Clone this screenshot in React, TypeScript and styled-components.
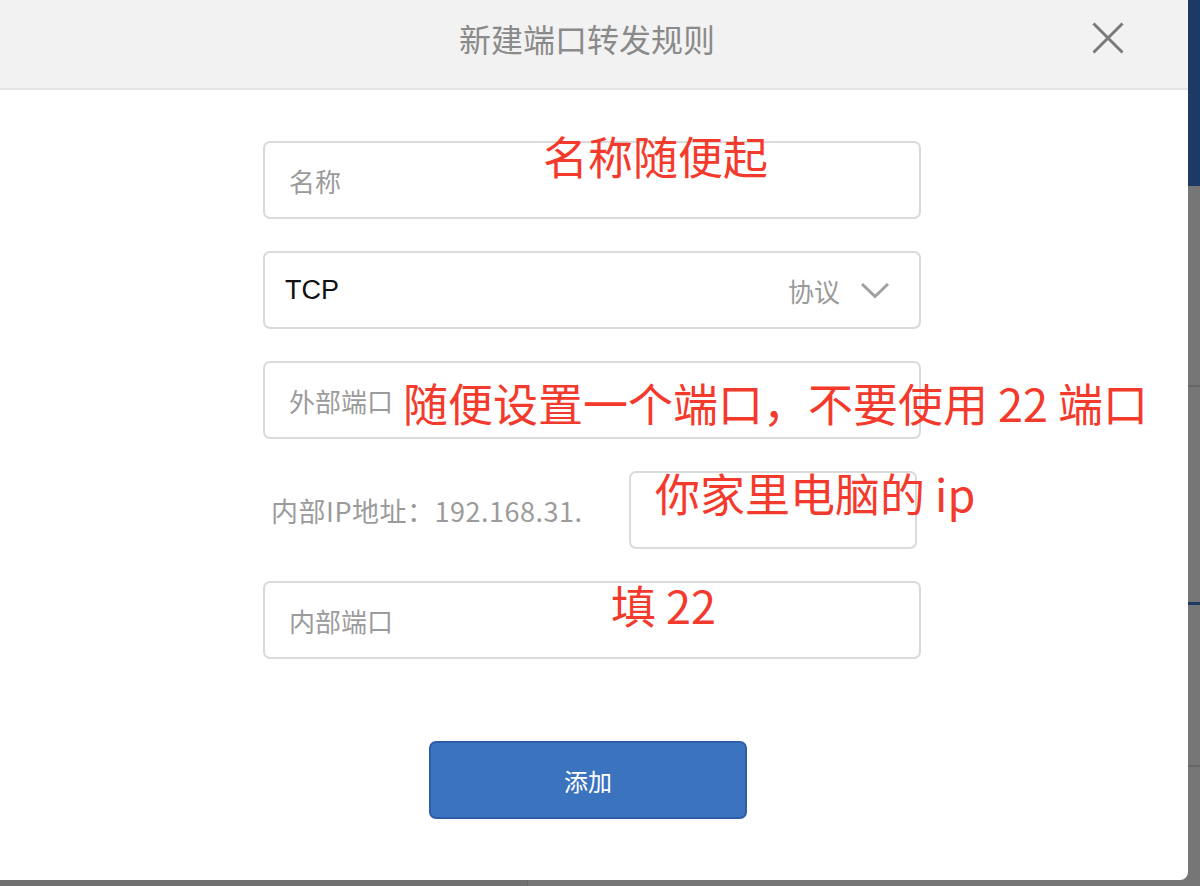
import styled, { createGlobalStyle } from "styled-components";

const GlobalStyle = createGlobalStyle`
  html, body {
    margin: 0;
    padding: 0;
  }
  body {
    width: 1200px;
    height: 886px;
    overflow: hidden;
    font-family: "Noto Sans CJK SC", "Noto Sans", sans-serif;
  }
  * {
    box-sizing: border-box;
  }
`;

const Annotation = ({ top, left, children }: { top: number; left: number; children: string }) => (
  <StyledNote style={{ top, left }}>{children}</StyledNote>
);

const App = () => {
  return (
    <StyledPage>
      <GlobalStyle />
      <StyledBackdrop>
        <div className="topbar" />
        <BackdropRow $height={201} $line="#676767" $lineWidth={2} />
        <BackdropRow $height={218} $line="#1d3a62" $lineWidth={3} />
        <BackdropRow $height={162} $line="#676767" $lineWidth={2} />
        <div className="footer">
          <div className="left" />
          <div className="right" />
        </div>
      </StyledBackdrop>

      <StyledModal>
        <StyledHeader>
          <div className="title">新建端口转发规则</div>
          <button className="close" aria-label="close">
            <svg width="32" height="32" viewBox="0 0 32 32">
              <line x1="1.5" y1="1.5" x2="30.5" y2="30.5" stroke="#7a7a7a" strokeWidth="3" />
              <line x1="30.5" y1="1.5" x2="1.5" y2="30.5" stroke="#7a7a7a" strokeWidth="3" />
            </svg>
          </button>
        </StyledHeader>

        <StyledBody>
          <StyledForm>
            <Field placeholder="名称" />
            <StyledSelect>
              <span className="value">TCP</span>
              <span className="label">协议</span>
              <svg width="30" height="17" viewBox="0 0 30 17">
                <polyline points="2,2 15,14.5 28,2" fill="none" stroke="#a0a0a0" strokeWidth="3" />
              </svg>
            </StyledSelect>
            <Field placeholder="外部端口" />
            <StyledIpRow>
              <span className="label">内部IP地址：192.168.31.</span>
              <Field $width="288px" />
            </StyledIpRow>
            <Field placeholder="内部端口" />
          </StyledForm>
          <StyledActions>
            <button>添加</button>
          </StyledActions>

          <Annotation top={43} left={543}>名称随便起</Annotation>
          <Annotation top={290} left={403}>随便设置一个端口，不要使用 22 端口</Annotation>
          <Annotation top={380} left={655}>你家里电脑的 ip</Annotation>
          <Annotation top={492} left={611}>填 22</Annotation>
        </StyledBody>
      </StyledModal>
    </StyledPage>
  );
};

export default App;

const StyledPage = styled.div`
  position: relative;
  width: 1200px;
  height: 886px;
  background: #767676;
  overflow: hidden;
`;

const StyledBackdrop = styled.div`
  display: flex;
  flex-direction: column;
  height: 100%;
  .topbar {
    height: 186px;
    background: #1c3a63;
  }
  .footer {
    flex: 1;
    display: flex;
  }
  .left {
    width: 528px;
    background: #707070;
    border-right: 1px solid #686868;
  }
  .right {
    flex: 1;
    background: #767676;
  }
`;

const BackdropRow = styled.div<{ $height: number; $line: string; $lineWidth: number }>`
  height: ${(p) => p.$height}px;
  background: #767676;
  border-bottom: ${(p) => p.$lineWidth}px solid ${(p) => p.$line};
`;

const StyledModal = styled.div`
  position: absolute;
  top: 0;
  left: 0;
  width: 1188px;
  height: 880px;
  background: #fff;
  border-bottom-right-radius: 8px;
  overflow: hidden;
  display: flex;
  flex-direction: column;
`;

const StyledHeader = styled.div`
  height: 90px;
  background: #f2f2f2;
  border-bottom: 2px solid #e4e4e4;
  display: grid;
  grid-template-columns: 1fr auto 1fr;
  align-items: center;
  padding-right: 14px;
  .title {
    grid-column: 2;
    font-size: 32px;
    color: #8a8a8a;
    line-height: 1;
    margin-bottom: 12px;
  }
  .close {
    grid-column: 3;
    justify-self: end;
    align-self: start;
    margin: 22px 50px 0 0;
    padding: 0;
    border: none;
    background: transparent;
    display: flex;
  }
`;

const StyledBody = styled.div`
  position: relative;
  flex: 1;
  padding: 51px 0 0 263px;
`;

const StyledForm = styled.div`
  width: 658px;
  display: flex;
  flex-direction: column;
  gap: 32px;
`;

const Field = styled.input<{ $width?: string }>`
  width: ${(p) => p.$width || "100%"};
  height: 78px;
  border: 2px solid #dadada;
  border-radius: 7px;
  padding: 0 24px;
  font-family: "Noto Sans CJK SC", sans-serif;
  font-size: 26px;
  color: #333;
  outline: none;
  background: #fff;
  &::placeholder {
    color: #9b9b9b;
  }
`;

const StyledSelect = styled.div`
  height: 78px;
  border: 2px solid #dadada;
  border-radius: 7px;
  padding: 0 29px 0 20px;
  display: flex;
  align-items: center;
  .value {
    flex: 1;
    font-family: "Liberation Sans", Arial, sans-serif;
    font-size: 27px;
    color: #111;
  }
  .label {
    font-size: 26px;
    color: #9b9b9b;
    margin-right: 20px;
  }
`;

const StyledIpRow = styled.div`
  height: 78px;
  display: flex;
  align-items: center;
  justify-content: space-between;
  padding: 0 4px 0 8px;
  .label {
    font-size: 27px;
    letter-spacing: 0.5px;
    color: #9b9b9b;
  }
`;

const StyledActions = styled.div`
  margin-top: 82px;
  padding-left: 166px;
  & button {
    width: 318px;
    height: 78px;
    background: #3b73bf;
    border: 2px solid #2d5fa9;
    border-radius: 7px;
    color: #fff;
    font-family: "Noto Sans CJK SC", sans-serif;
    font-size: 24px;
    cursor: pointer;
  }
`;

const StyledNote = styled.div`
  position: absolute;
  font-family: "Noto Sans CJK SC", sans-serif;
  font-size: 45px;
  line-height: 45px;
  color: #f43a2c;
  white-space: nowrap;
  pointer-events: none;
`;
